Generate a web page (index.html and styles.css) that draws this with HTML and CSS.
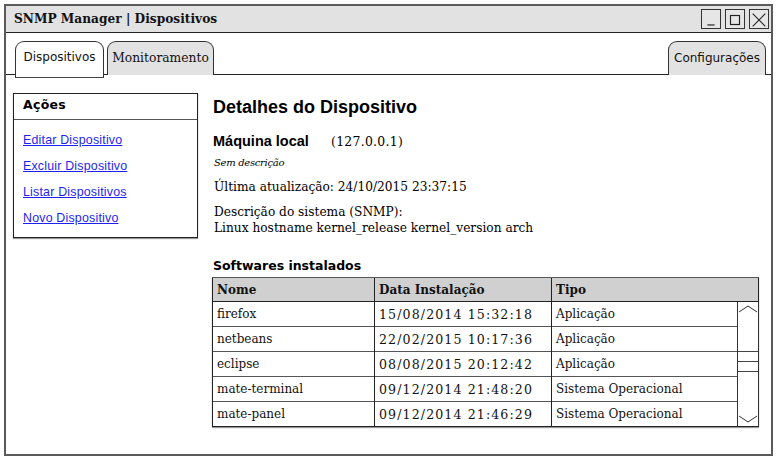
FILE: index.html
```html
<!DOCTYPE html>
<html lang="pt">
<head>
<meta charset="utf-8">
<title>SNMP Manager | Dispositivos</title>
<link rel="stylesheet" href="styles.css">
</head>
<body>
<div class="window">
  <div class="titlebar">
    <span class="title">SNMP Manager | Dispositivos</span>
    <div class="winbtns">
      <span class="wb"><svg width="20" height="20" viewBox="0 0 20 20"><path d="M6 15.5 H14" stroke="#222" stroke-width="1.3" fill="none"/></svg></span>
      <span class="wb"><svg width="20" height="20" viewBox="0 0 20 20"><rect x="5" y="5" width="10" height="10" stroke="#222" stroke-width="1.3" fill="none"/></svg></span>
      <span class="wb"><svg width="20" height="20" viewBox="0 0 20 20"><path d="M3 3 L17 17 M17 3 L3 17" stroke="#222" stroke-width="1.2" fill="none"/></svg></span>
    </div>
  </div>
  <div class="tabs">
    <div class="tab active">Dispositivos</div>
    <div class="tab serif">Monitoramento</div>
    <div class="spacer"></div>
    <div class="tab">Configurações</div>
  </div>
  <div class="main">
    <aside class="actions">
      <div class="actions-head">Ações</div>
      <ul class="links">
        <li><a href="#">Editar Dispositivo</a></li>
        <li><a href="#">Excluir Dispositivo</a></li>
        <li><a href="#">Listar Dispositivos</a></li>
        <li><a href="#">Novo Dispositivo</a></li>
      </ul>
    </aside>
    <section class="details">
      <h1 class="heading">Detalhes do Dispositivo</h1>
      <div class="machine"><span class="mname">Máquina local</span><span class="ip">(127.0.0.1)</span></div>
      <div class="nodesc">Sem descrição</div>
      <div class="txt updated">Última atualização: <span class="num">24/10/2015 23:37:15</span></div>
      <div class="txt sysdesc">Descrição do sistema (SNMP):<br>Linux hostname kernel_release kernel_version arch</div>
      <h2 class="subheading">Softwares instalados</h2>
      <table class="grid">
        <colgroup>
          <col class="c-nome"><col class="c-data"><col class="c-tipo"><col class="c-scroll">
        </colgroup>
        <thead>
          <tr><th>Nome</th><th>Data Instalação</th><th colspan="2">Tipo</th></tr>
        </thead>
        <tbody>
          <tr><td>firefox</td><td class="date">15/08/2014 15:32:18</td><td>Aplicação</td>
            <td class="scroll" rowspan="5">
              <div class="sb">
                <svg class="chev" width="20" height="12" viewBox="0 0 20 12"><path d="M1 9 L10 3 L19 9" stroke="#333" stroke-width="1" fill="none"/></svg>
                <div class="thumb"><span></span><span></span><span></span></div>
                <svg class="chev" width="20" height="12" viewBox="0 0 20 12"><path d="M1 3 L10 9 L19 3" stroke="#333" stroke-width="1" fill="none"/></svg>
              </div>
            </td>
          </tr>
          <tr><td>netbeans</td><td class="date">22/02/2015 10:17:36</td><td>Aplicação</td></tr>
          <tr><td>eclipse</td><td class="date">08/08/2015 20:12:42</td><td>Aplicação</td></tr>
          <tr><td>mate-terminal</td><td class="date">09/12/2014 21:48:20</td><td>Sistema Operacional</td></tr>
          <tr><td>mate-panel</td><td class="date">09/12/2014 21:46:29</td><td>Sistema Operacional</td></tr>
        </tbody>
      </table>
    </section>
  </div>
</div>
</body>
</html>
```

FILE: styles.css
```css
* { box-sizing: border-box; }
html, body { margin: 0; padding: 0; background: #fff; }
body { width: 778px; height: 461px; overflow: hidden; }

.window {
  margin: 4px;
  width: 769px;
  height: 452px;
  border: 2px solid #5a5a5a;
  border-bottom-width: 2.5px;
  display: flex;
  flex-direction: column;
  background: #fff;
}

.titlebar {
  height: 27px;
  flex: none;
  background: #e2e2e2;
  border-bottom: 1.5px solid #222;
  display: flex;
  align-items: center;
  padding: 0 2px 0 8px;
}
.title {
  font-family: "DejaVu Serif", serif;
  font-weight: bold;
  font-size: 12.2px;
  color: #111;
  flex: 1;
}
.winbtns { display: flex; gap: 4px; }
.wb {
  width: 20px; height: 20px;
  border: 1.3px solid #333;
  display: flex;
  background: #e6e6e6;
}
.wb svg { display: block; }

.tabs {
  display: flex;
  align-items: flex-end;
  padding: 7px 5px 0 8px;
  border-bottom: 1.5px solid #222;
  height: 42px;
  flex: none;
}
.tab {
  height: 34px;
  margin-bottom: -1px;
  border: 1.3px solid #333;
  border-bottom: none;
  border-radius: 9px 9px 0 0;
  background: #e2e2e2;
  font-family: "DejaVu Sans", sans-serif;
  font-size: 12px;
  color: #111;
  display: flex;
  align-items: center;
  justify-content: center;
  padding: 0 3px 2px;
  margin-right: 3px;
}
.tab.serif { font-family: "DejaVu Serif", serif; font-size: 12.3px; width: 107px; }
.tab.active {
  background: #fff;
  width: 89px;
  height: 37px;
  margin-bottom: -4px;
  border-bottom: 1.5px solid #444;
  padding-bottom: 5px;
  margin-left: 1px;
}
.tabs .tab:last-child { width: 98px; margin-right: 0; }
.spacer { flex: 1; }

.main {
  flex: 1;
  display: flex;
  align-items: flex-start;
  padding: 18px 0 0 7px;
}

.actions {
  width: 185px;
  height: 145px;
  border: 1.3px solid #222;
  box-shadow: 0 1px 1px #999;
  flex: none;
}
.actions-head {
  height: 26px;
  border-bottom: 1.5px solid #555;
  font-family: "DejaVu Sans", sans-serif;
  font-weight: bold;
  font-size: 12.5px;
  padding: 3px 0 0 9px;
  letter-spacing: 0.3px;
}
.links {
  list-style: none;
  margin: 0;
  padding: 11px 0 0 9px;
}
.links li { height: 26px; line-height: 16px; }
.links a {
  font-family: "Liberation Sans", sans-serif;
  font-size: 12.4px;
  color: #1f1fee;
  text-decoration: underline;
  letter-spacing: 0.2px;
}

.details {
  margin-left: 14px;
  margin-top: 3px;
  flex: 1;
}
.heading {
  margin: 0 0 0 1px;
  font-family: "Liberation Sans", sans-serif;
  font-size: 18px;
  line-height: 22px;
  font-weight: bold;
  color: #000;
}
.machine { margin: 15px 0 0 1px; line-height: 16px; display: flex; align-items: baseline; }
.mname {
  font-family: "Liberation Sans", sans-serif;
  font-weight: bold;
  font-size: 14.5px;
  width: 118px;
}
.ip { font-family: "DejaVu Serif", serif; font-size: 12.4px; letter-spacing: 0.3px; }
.nodesc {
  margin-top: 6px;
  font-family: "DejaVu Serif", serif;
  font-style: italic;
  font-size: 10px;
  line-height: 14px;
  letter-spacing: -0.3px;
  margin-left: 2px;
}
.txt {
  font-family: "DejaVu Serif", serif;
  font-size: 12.2px;
  line-height: 16px;
  color: #000;
  margin-left: 2px;
}
.updated { margin-top: 9px; }
.sysdesc { margin-top: 9px; }
.subheading {
  margin: 22px 0 0 1px;
  font-family: "DejaVu Sans", sans-serif;
  font-weight: bold;
  font-size: 12.5px;
  line-height: 16px;
}

.grid {
  margin-top: 3px;
  width: 546px;
  border-collapse: collapse;
  table-layout: fixed;
  border: 1.5px solid #222;
  box-shadow: 0 1px 1px #999;
}
.c-nome { width: 162px; }
.c-data { width: 177px; }
.c-tipo { width: 186px; }
.c-scroll { width: 21px; }
.grid th, .grid td {
  font-family: "DejaVu Serif", serif;
  font-size: 12px;
  text-align: left;
  padding: 0 4px;
  border-left: 1.3px solid #222;
  border-top: 1.3px solid #555;
  color: #111;
}
.grid td.date { font-size: 12.6px; letter-spacing: 1.1px; }
.grid th {
  background: #d0d0d0;
  height: 24px;
  font-weight: bold;
  border-bottom: 1.5px solid #222;
}
.grid td { height: 25px; }
.grid td.scroll { padding: 0; border-left: 1.3px solid #333; border-right: 1.3px solid #333; }
.sb {
  height: 122px;
  display: flex;
  flex-direction: column;
  justify-content: space-between;
  align-items: center;
}
.chev { display: block; }
.thumb {
  width: 20px;
  display: flex;
  flex-direction: column;
  gap: 9px;
  margin-bottom: 6px;
}
.thumb span { display: block; height: 1px; background: #444; }
```
